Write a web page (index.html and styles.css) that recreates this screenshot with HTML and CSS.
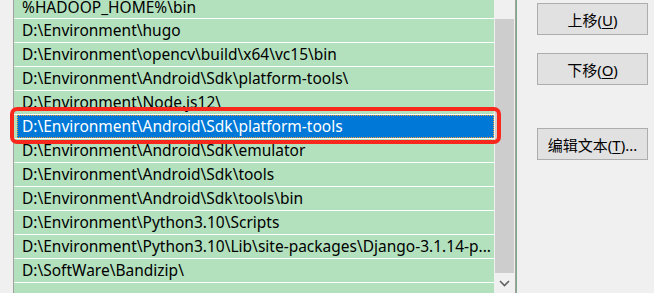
FILE: index.html
```html
<!DOCTYPE html>
<html lang="zh-CN">
<head>
<meta charset="utf-8">
<title>编辑环境变量</title>
<link rel="stylesheet" href="styles.css">
</head>
<body>
<div class="window">
  <div class="gutter"></div>
  <div class="listbox">
    <div class="list">
      <div class="row partial"><span class="txt">%HADOOP_HOME%\bin</span></div>
      <div class="row"><span class="txt">D:\Environment\hugo</span></div>
      <div class="row"><span class="txt">D:\Environment\opencv\build\x64\vc15\bin</span></div>
      <div class="row"><span class="txt">D:\Environment\Android\Sdk\platform-tools\</span></div>
      <div class="row"><span class="txt">D:\Environment\Node.js12\</span></div>
      <div class="row selected"><span class="txt">D:\Environment\Android\Sdk\platform-tools</span></div>
      <div class="row"><span class="txt">D:\Environment\Android\Sdk\emulator</span></div>
      <div class="row"><span class="txt">D:\Environment\Android\Sdk\tools</span></div>
      <div class="row"><span class="txt">D:\Environment\Android\Sdk\tools\bin</span></div>
      <div class="row"><span class="txt">D:\Environment\Python3.10\Scripts</span></div>
      <div class="row"><span class="txt">D:\Environment\Python3.10\Lib\site-packages\Django-3.1.14-p...</span></div>
      <div class="row"><span class="txt">D:\SoftWare\Bandizip\</span></div>
      <div class="row"><span class="txt"></span></div>
    </div>
    <div class="scrollbar">
      <div class="track-top"></div>
      <div class="thumb"></div>
      <div class="arrow-down">
        <svg width="11" height="7" viewBox="0 0 11 7"><path d="M1 1 L5.5 5.5 L10 1" fill="none" stroke="#606060" stroke-width="1.6"/></svg>
      </div>
    </div>
    <div class="highlight"></div>
  </div>
  <div class="edge"></div>
  <div class="side">
    <button class="btn btn-up">上移(<u>U</u>)</button>
    <button class="btn btn-down">下移(<u>O</u>)</button>
    <button class="btn btn-edit">编辑文本(<u>T</u>)...</button>
  </div>
</div>
</body>
</html>
```
FILE: styles.css
```css
html, body {
  margin: 0;
  padding: 0;
  background: #f0f0f0;
  overflow: hidden;
}
body {
  font-family: "Noto Sans", "Noto Sans CJK SC", sans-serif;
  font-size: 15.5px;
  color: #000;
}
.window {
  display: flex;
  width: 654px;
  height: 293px;
  overflow: hidden;
}
.gutter {
  width: 13px;
  flex: none;
}
.listbox {
  position: relative;
  display: flex;
  width: 502px;
  flex: none;
  border-left: 1px solid #a0a0a0;
  box-sizing: border-box;
}
.list {
  width: 480px;
  flex: none;
  background: #b3e1be;
}
.row {
  height: 23px;
  border-bottom: 1px solid #ffffff;
  display: flex;
  align-items: center;
  white-space: nowrap;
  overflow: hidden;
}
.row .txt {
  padding-left: 8px;
  line-height: 23px;
}
.row.partial {
  height: 18px;
  align-items: flex-start;
}
.row.partial .txt {
  line-height: 15px;
}
.row.selected {
  padding: 0 0 0 3px;
}
.row.selected .txt {
  flex: 1;
  height: 23px;
  box-sizing: border-box;
  background: #0078d7;
  color: #fff;
  border: 1px dotted #f0a030;
  padding-left: 4px;
  line-height: 21px;
}
.scrollbar {
  width: 21px;
  flex: none;
  display: flex;
  flex-direction: column;
  background: #f0f0f0;
}
.track-top {
  height: 19px;
  flex: none;
}
.thumb {
  flex: 1;
  background: #cdcdcd;
  margin: 0 1px 0 1px;
}
.arrow-down {
  height: 20px;
  flex: none;
  display: flex;
  align-items: center;
  justify-content: center;
}
.highlight {
  position: absolute;
  left: -4px;
  top: 107px;
  width: 491px;
  height: 37px;
  box-sizing: border-box;
  border: 4px solid #f8281c;
  border-radius: 7px;
}
.edge {
  width: 2px;
  flex: none;
  border-left: 1px solid #a0a0a0;
  box-sizing: border-box;
  background: #7fa98b;
}
.side {
  flex: 1;
  display: flex;
  flex-direction: column;
  padding: 3px 0 0 20px;
}
.btn {
  width: 111px;
  height: 32px;
  background: #e1e1e1;
  border: 1px solid #adadad;
  font-family: "Noto Sans", "Noto Sans CJK SC", sans-serif;
  font-size: 15px;
  color: #000;
  padding: 0;
  margin: 0;
}
.btn u {
  text-decoration-thickness: 1px;
  text-underline-offset: 2px;
}
.btn-down {
  margin-top: 18px;
}
.btn-edit {
  margin-top: 43px;
}
```
